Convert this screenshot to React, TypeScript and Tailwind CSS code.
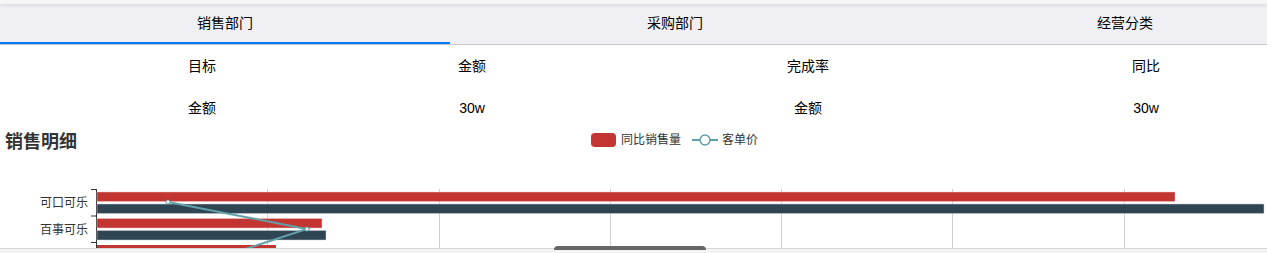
import React from "react";

const tabs = ["销售部门", "采购部门", "经营分类"];

const rows = [
  ["目标", "金额", "完成率", "同比"],
  ["金额", "30w", "金额", "30w"],
];

const gridX = [267, 439, 610, 781, 952, 1124];

function SalesChart() {
  // chart coords are page x, y minus 150
  return (
    <svg width={1267} height={98} className="block">
      {gridX.map((x) => (
        <line key={x} x1={x + 0.5} y1={39} x2={x + 0.5} y2={98} stroke="#cfcfcf" strokeWidth={1} />
      ))}
      {/* y axis */}
      <line x1={96.5} y1={39} x2={96.5} y2={98} stroke="#333" strokeWidth={1} />
      {[39.5, 66, 92.5].map((y) => (
        <line key={y} x1={91} y1={y} x2={96.5} y2={y} stroke="#333" strokeWidth={1} />
      ))}
      {/* bars */}
      <rect x={97} y={42} width={1078} height={9.5} fill="#c23531" stroke="#f0c8c8" strokeWidth={0.5} />
      <rect x={97} y={54} width={1167} height={9.5} fill="#2f4554" stroke="#c9d0d5" strokeWidth={0.5} />
      <rect x={97} y={68.5} width={225} height={9.5} fill="#c23531" stroke="#f0c8c8" strokeWidth={0.5} />
      <rect x={97} y={80.5} width={229} height={9.5} fill="#2f4554" stroke="#c9d0d5" strokeWidth={0.5} />
      <rect x={97} y={95} width={179} height={9.5} fill="#c23531" />
      {/* line series */}
      <polyline points="168,52 307,79 230,104" fill="none" stroke="#61a0a8" strokeWidth={2} />
      <circle cx={168} cy={52} r={2} fill="#fff" stroke="#61a0a8" strokeWidth={1} />
      <circle cx={307} cy={79} r={2} fill="#fff" stroke="#61a0a8" strokeWidth={1} />
      {/* category labels */}
      <text x={88} y={57} textAnchor="end" fontSize={12} fill="#333" fontFamily="'Noto Sans CJK SC', sans-serif">
        可口可乐
      </text>
      <text x={88} y={84} textAnchor="end" fontSize={12} fill="#333" fontFamily="'Noto Sans CJK SC', sans-serif">
        百事可乐
      </text>
      <text x={88} y={110} textAnchor="end" fontSize={12} fill="#333" fontFamily="'Noto Sans CJK SC', sans-serif">
        雪碧汽水
      </text>
    </svg>
  );
}

export default function App() {
  return (
    <div
      className="relative w-[1267px] h-[253px] overflow-hidden bg-white text-black"
      style={{ fontFamily: "'Liberation Sans', 'Noto Sans CJK SC', sans-serif" }}
    >
      <div className="h-[4px] bg-[#f5f5f5] shadow-[0_1px_4px_rgba(0,0,0,0.12)] relative z-10" />

      {/* tabs */}
      <div className="flex h-[41px] bg-[#efeff4] border-b border-[#c8c7cc] overflow-hidden">
        {tabs.map((t, i) => (
          <div key={t} className="w-[450px] shrink-0 flex flex-col">
            <div className="flex-1 flex items-center justify-center text-[14px] pt-[1px]">{t}</div>
            <div className={i === 0 ? "h-[2px] bg-[#007aff]" : "h-[2px]"} />
          </div>
        ))}
      </div>

      {/* summary */}
      <div>
        {rows.map((r, ri) => (
          <div key={ri} className="grid grid-cols-[404px_136px_536px_140px] h-[42px] items-center text-[14px]">
            {r.map((c, ci) => (
              <div key={ci} className="text-center">
                {c}
              </div>
            ))}
          </div>
        ))}
      </div>

      {/* detail */}
      <div className="relative">
        <div className="flex items-center h-[26px]">
          <h2 className="pl-[5px] text-[18px] font-bold text-[#333]">销售明细</h2>
          <div className="absolute left-[591px] top-[2px] flex items-center gap-[5px] text-[12px] text-[#333]">
            <span className="w-[25px] h-[14px] rounded-[4px] bg-[#c23531]" />
            <span>同比销售量</span>
            <svg width={26} height={14} className="ml-[6px]">
              <line x1={0} y1={7} x2={26} y2={7} stroke="#61a0a8" strokeWidth={2} />
              <circle cx={13} cy={7} r={5} fill="#fff" stroke="#61a0a8" strokeWidth={1.5} />
            </svg>
            <span className="-ml-[1px]">客单价</span>
          </div>
        </div>
        <div className="-mt-[5px]">
          <SalesChart />
        </div>
      </div>

      {/* bottom bar */}
      <div className="absolute left-0 right-0 top-[248px] h-[5px] bg-[#f4f4f4] border-t border-[#d6d6d6]">
        <div className="absolute left-[554px] -top-[3px] w-[152px] h-[4px] rounded-t-[4px] bg-[#666]" />
      </div>
    </div>
  );
}
